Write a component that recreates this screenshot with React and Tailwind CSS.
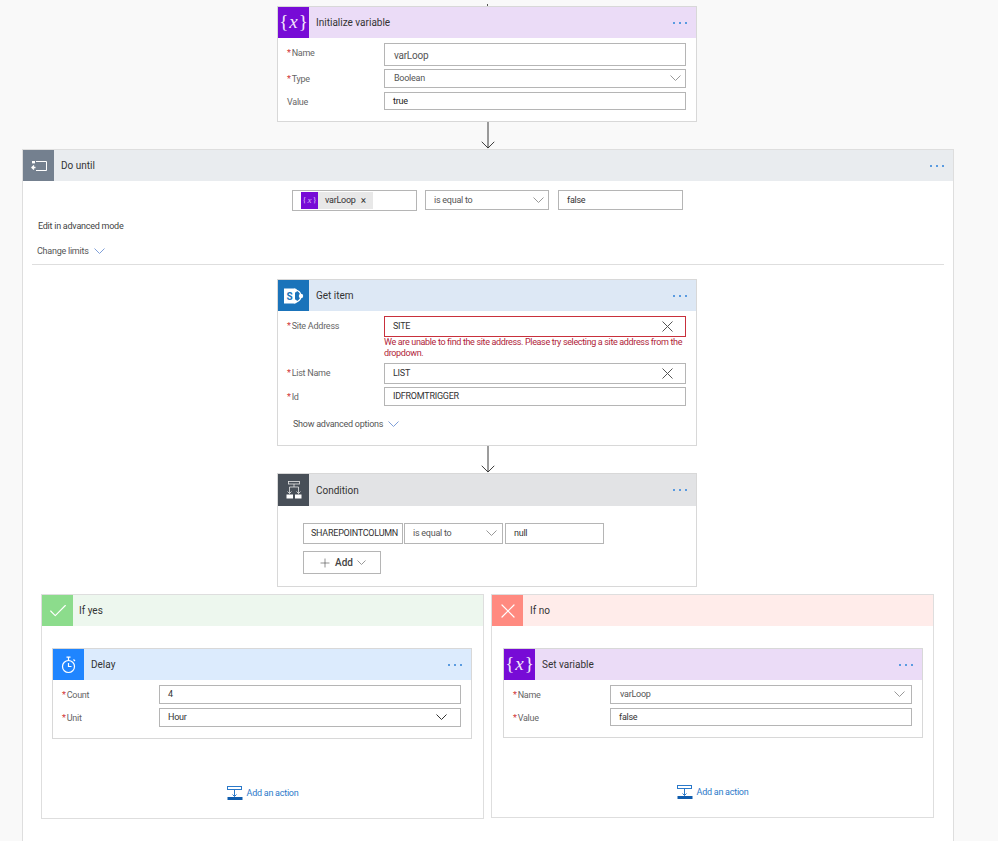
import { Check, Plus, X } from "lucide-react";

const font = "font-['Roboto',sans-serif]";

function VarIcon({ small }) {
  return (
    <span
      className={
        small
          ? "flex w-[17px] h-[17px] shrink-0 items-center justify-center bg-[#770bd6] text-[#d9b8f5] text-[9px] tracking-normal font-['Liberation_Serif',serif]"
          : "flex w-[31px] shrink-0 items-center justify-center bg-[#770bd6] text-[#f3e8fb] text-[19px] tracking-normal font-['Liberation_Serif',serif]"
      }
    >
      {"{"}
      <i className="mx-[1px]">x</i>
      {"}"}
    </span>
  );
}

function SharePointIcon() {
  return (
    <span className="flex w-[31px] shrink-0 items-center justify-center bg-[#1a73ba]">
      <svg width="22" height="18" viewBox="0 0 22 18">
        <circle cx="12" cy="9" r="6" fill="none" stroke="#fff" strokeWidth="1.2" />
        <circle cx="18" cy="9" r="2.2" fill="#fff" />
        <circle cx="12" cy="3.5" r="2" fill="#fff" />
        <circle cx="12" cy="14.5" r="2" fill="#fff" />
        <rect x="1" y="1.5" width="11" height="15" fill="#fff" />
        <text x="3.5" y="13" fontSize="10" fontWeight="700" fill="#1a73ba" fontFamily="Roboto, sans-serif">
          S
        </text>
      </svg>
    </span>
  );
}

function ConditionIcon() {
  return (
    <span className="flex w-[31px] shrink-0 items-center justify-center bg-[#484f58]">
      <svg width="16" height="19" viewBox="0 0 16 19" fill="none" stroke="#e8e8e8" strokeWidth="0.8">
        <rect x="2.5" y="0.5" width="11" height="2.5" />
        <path d="M8 3V6M3.5 6H12.5M3.5 6V12.5M12.5 6V12.5" />
        <path d="M1.5 10.5L3.5 12.5L5.5 10.5M10.5 10.5L12.5 12.5L14.5 10.5" />
        <rect x="0.5" y="13.5" width="6.5" height="4" fill="#fff" stroke="none" />
        <rect x="9" y="13.5" width="6.5" height="4" fill="#fff" stroke="none" />
      </svg>
    </span>
  );
}

function LoopIcon() {
  return (
    <span className="flex w-[31px] shrink-0 items-center justify-center bg-[#74808f]">
      <svg width="16" height="12" viewBox="0 0 16 12" fill="none" stroke="#fff" strokeWidth="1">
        <path d="M5 1.5H15.5V10.5H5" />
        <path d="M0.5 7.5H4.5M3 5.5L1 7.5L3 9.5" strokeWidth="1.4" />
        <rect x="1" y="1" width="3" height="2.4" fill="#fff" stroke="none" />
      </svg>
    </span>
  );
}

function DelayIcon() {
  return (
    <span className="flex w-[31px] shrink-0 items-center justify-center bg-[#1f85ff]">
      <svg width="16" height="18" viewBox="0 0 16 18" fill="none" stroke="#fff" strokeWidth="1.2">
        <circle cx="7.5" cy="10.5" r="6" />
        <path d="M5.5 1.2H9.5M7.5 1.2V4.5M7.5 7V10.5H10.5M12.5 3.5L14 5" />
      </svg>
    </span>
  );
}

function AddActionIcon() {
  return (
    <svg width="16" height="15" viewBox="0 0 16 15" fill="none" stroke="#2b79c9" strokeWidth="1">
      <rect x="0.5" y="0.5" width="14" height="3" />
      <path d="M7.5 3.5V10.5M5.5 8.5L7.5 10.5L9.5 8.5" />
      <rect x="0.5" y="11" width="15" height="3" fill="#0f5cad" stroke="none" />
    </svg>
  );
}

function Chevron({ w = 11, color = "#999", className = "" }) {
  return (
    <svg width={w} height={w / 2 + 1} viewBox={`0 0 ${w} ${w / 2 + 1}`} fill="none" stroke={color} strokeWidth="1" className={className}>
      <path d={`M0.5 0.5L${w / 2} ${w / 2}L${w - 0.5} 0.5`} />
    </svg>
  );
}

function Clear() {
  return (
    <svg width="11" height="11" viewBox="0 0 11 11" fill="none" stroke="#555" strokeWidth="1" className="mr-[8px]">
      <path d="M0.5 0.5L10.5 10.5M10.5 0.5L0.5 10.5" />
    </svg>
  );
}

function Dots() {
  return (
    <span className="ml-auto mr-[9px] flex gap-[4px]">
      <span className="h-[2px] w-[2px] bg-[#5a9be0]" />
      <span className="h-[2px] w-[2px] bg-[#5a9be0]" />
      <span className="h-[2px] w-[2px] bg-[#5a9be0]" />
    </span>
  );
}

function Header({ icon, title, bg, h = "h-[31px]" }) {
  return (
    <div className={`flex ${h} items-stretch ${bg}`}>
      {icon}
      <div className="flex flex-1 items-center pl-[7px] text-[10px] tracking-normal text-[#333]">
        {title}
        <Dots />
      </div>
    </div>
  );
}

function Field({ label, required, children, className = "" }) {
  return (
    <div className={`flex ${className}`}>
      <div className="w-[106px] shrink-0 pl-[9px] pt-[4px] text-[9px] leading-[13px] text-[#666]">
        {required && <span className="mr-[1px] text-[#d13438]">*</span>}
        {label}
      </div>
      <div className="mr-[10px] flex-1">{children}</div>
    </div>
  );
}

function Input({ value, h = "h-[19px]", pl = "pl-[8px]", size = "text-[9px]", color = "text-[#333]", border = "border-[#b5b5b5]", icon }) {
  return (
    <div className={`flex ${h} items-center border ${border} bg-white ${pl} pr-[4px] ${size} ${color}`}>
      <span className="pt-[1px]">{value}</span>
      {icon && <span className="ml-auto flex">{icon}</span>}
    </div>
  );
}

function Arrow({ h = "h-[27px]" }) {
  return (
    <div className={`flex ${h} justify-center pr-[1px]`}>
      <svg width="16" height="100%" viewBox="0 0 16 28" preserveAspectRatio="xMidYMax meet" fill="none" stroke="#333" strokeWidth="1">
        <path d="M8 0V27M1.5 20.5L8 27L14.5 20.5" />
      </svg>
    </div>
  );
}

function Branch({ title, headerBg, iconBg, iconEl, w, pt, card, actionGap, titlePl }) {
  return (
    <div className={`${w} border border-[#dedede] bg-white`}>
      <div className={`flex h-[31px] ${headerBg}`}>
        <span className={`flex w-[31px] items-center justify-center ${iconBg}`}>{iconEl}</span>
        <span className={`flex items-center ${titlePl} text-[10px] tracking-normal text-[#333]`}>{title}</span>
      </div>
      <div className={pt}>{card}</div>
      <div className={`flex items-center justify-center gap-[4px] ${actionGap} text-[9px] text-[#2b79c9]`}>
        <AddActionIcon />
        Add an action
      </div>
    </div>
  );
}

export default function App() {
  return (
    <div className={`h-[841px] w-[998px] overflow-hidden bg-[#f9f9f9] pl-[22px] pt-[4px] tracking-[-0.25px] ${font}`}>
      <div className="w-[932px]">
        <div className="ml-[465px] h-[2px] w-[1px] bg-[#555]" />

        {/* Initialize variable */}
        <div className="ml-[255px] w-[420px] border border-[#d8d8d8] bg-white pb-[11px]">
          <Header icon={<VarIcon />} title="Initialize variable" bg="bg-[#ebdcf7]" />
          <Field label="Name" required className="mt-[5px]">
            <Input value="varLoop" h="h-[23px]" pl="pl-[9px]" size="text-[10px]" color="text-[#555]" />
          </Field>
          <Field label="Type" required className="mt-[3px]">
            <Input value="Boolean" pl="pl-[9px]" color="text-[#555]" icon={<Chevron />} />
          </Field>
          <Field label="Value" className="mt-[4px]">
            <Input value="true" h="h-[18px]" color="text-[#222]" />
          </Field>
        </div>
        <Arrow />

        {/* Do until */}
        <div className="h-[700px] border border-[#dedede] bg-white">
          <Header icon={<LoopIcon />} title="Do until" bg="bg-[#e9ecef]" />
          <div className="mt-[9px] flex pl-[269px]">
            <div className="flex h-[21px] w-[125px] items-center border border-[#b5b5b5] pl-[8px]">
              <VarIcon small />
              <span className="flex h-[17px] w-[55px] items-center gap-[5px] bg-[#e8e8e8] pl-[7px] text-[9px] text-[#333]">
                varLoop <span className="text-[10px] leading-none">×</span>
              </span>
            </div>
            <div className="ml-[8px] w-[124px]">
              <Input value="is equal to" h="h-[20px]" color="text-[#555]" icon={<Chevron />} />
            </div>
            <div className="ml-[9px] w-[125px]">
              <Input value="false" h="h-[20px]" />
            </div>
          </div>
          <div className="mt-[9px] pl-[15px] text-[9px] leading-[13px] text-[#444]">Edit in advanced mode</div>
          <div className="mt-[12px] flex items-center gap-[5px] pl-[14px] text-[9px] leading-[13px] text-[#555]">
            Change limits <Chevron color="#7f9fd8" />
          </div>
          <div className="mx-[9px] mt-[6px] border-t border-[#dedede]" />

          {/* Get item */}
          <div className="ml-[254px] mt-[14px] w-[420px] border border-[#d8d8d8] bg-white pb-[14px]">
            <Header icon={<SharePointIcon />} title="Get item" bg="bg-[#dde8f5]" />
            <Field label="Site Address" required className="mt-[5px]">
              <Input value="SITE" h="h-[21px]" border="border-[#c8303c]" icon={<Clear />} />
              <p className="text-[9px] leading-[11px] tracking-[-0.35px] text-[#b01e3a]">
                We are unable to find the site address. Please try selecting a site address from the dropdown.
              </p>
            </Field>
            <Field label="List Name" required className="mt-[4px]">
              <Input value="LIST" h="h-[21px]" icon={<Clear />} />
            </Field>
            <Field label="Id" required className="mt-[3px]">
              <Input value="IDFROMTRIGGER" />
            </Field>
            <div className="mt-[12px] flex items-center gap-[5px] pl-[15px] text-[9px] leading-[13px] text-[#555]">
              Show advanced options <Chevron color="#7f9fd8" />
            </div>
          </div>
          <Arrow />

          {/* Condition */}
          <div className="ml-[254px] w-[420px] border border-[#d8d8d8] bg-white pb-[12px]">
            <Header icon={<ConditionIcon />} title="Condition" bg="bg-[#e2e3e5]" h="h-[32px]" />
            <div className="ml-[25px] mt-[17px] flex">
              <div className="w-[100px]">
                <Input value="SHAREPOINTCOLUMN" h="h-[21px]" pl="pl-[7px]" size="text-[9px]" />
              </div>
              <div className="ml-[1px] w-[99px]">
                <Input value="is equal to" h="h-[21px]" color="text-[#555]" icon={<Chevron className="mr-[1px]" />} />
              </div>
              <div className="ml-[2px] w-[99px]">
                <Input value="null" h="h-[21px]" />
              </div>
            </div>
            <div className="ml-[25px] mt-[7px] flex h-[23px] w-[78px] items-center justify-center gap-[3px] border border-[#b5b5b5] text-[10px] font-medium tracking-normal text-[#444]">
              <Plus size={14} strokeWidth={1} />
              Add
              <Chevron w={9} className="ml-[1px]" />
            </div>
          </div>

          {/* Branches */}
          <div className="ml-[18px] mt-[7px] flex items-start gap-[7px]">
            <Branch
              title="If yes"
              titlePl="pl-[6px]"
              headerBg="bg-[#edf7ee]"
              iconBg="bg-[#8cdc8c]"
              iconEl={<Check size={22} strokeWidth={1.2} className="text-white" />}
              w="w-[443px] h-[225px]"
              pt="pl-[10px] pt-[22px]"
              actionGap="mt-[47px]"
              card={
                <div className="w-[420px] border border-[#d8d8d8] bg-white pb-[11px]">
                  <Header icon={<DelayIcon />} title="Delay" bg="bg-[#dcebfd]" />
                  <Field label="Count" required className="mt-[5px]">
                    <Input value="4" />
                  </Field>
                  <Field label="Unit" required className="mt-[4px]">
                    <Input value="Hour" icon={<Chevron color="#333" className="mr-[9px]" />} />
                  </Field>
                </div>
              }
            />
            <Branch
              title="If no"
              titlePl="pl-[7px]"
              headerBg="bg-[#ffecea]"
              iconBg="bg-[#ff8a80]"
              iconEl={<X size={24} strokeWidth={1.2} className="text-white" />}
              w="w-[443px] h-[224px]"
              pt="pl-[11px] pt-[22px]"
              actionGap="mt-[47px]"
              card={
                <div className="w-[420px] border border-[#d8d8d8] bg-white pb-[11px]">
                  <Header icon={<VarIcon />} title="Set variable" bg="bg-[#ebdcf7]" />
                  <Field label="Name" required className="mt-[5px]">
                    <Input value="varLoop" pl="pl-[9px]" color="text-[#555]" icon={<Chevron className="mr-[2px]" />} />
                  </Field>
                  <Field label="Value" required className="mt-[4px]">
                    <Input value="false" h="h-[18px]" />
                  </Field>
                </div>
              }
            />
          </div>
        </div>
      </div>
    </div>
  );
}
